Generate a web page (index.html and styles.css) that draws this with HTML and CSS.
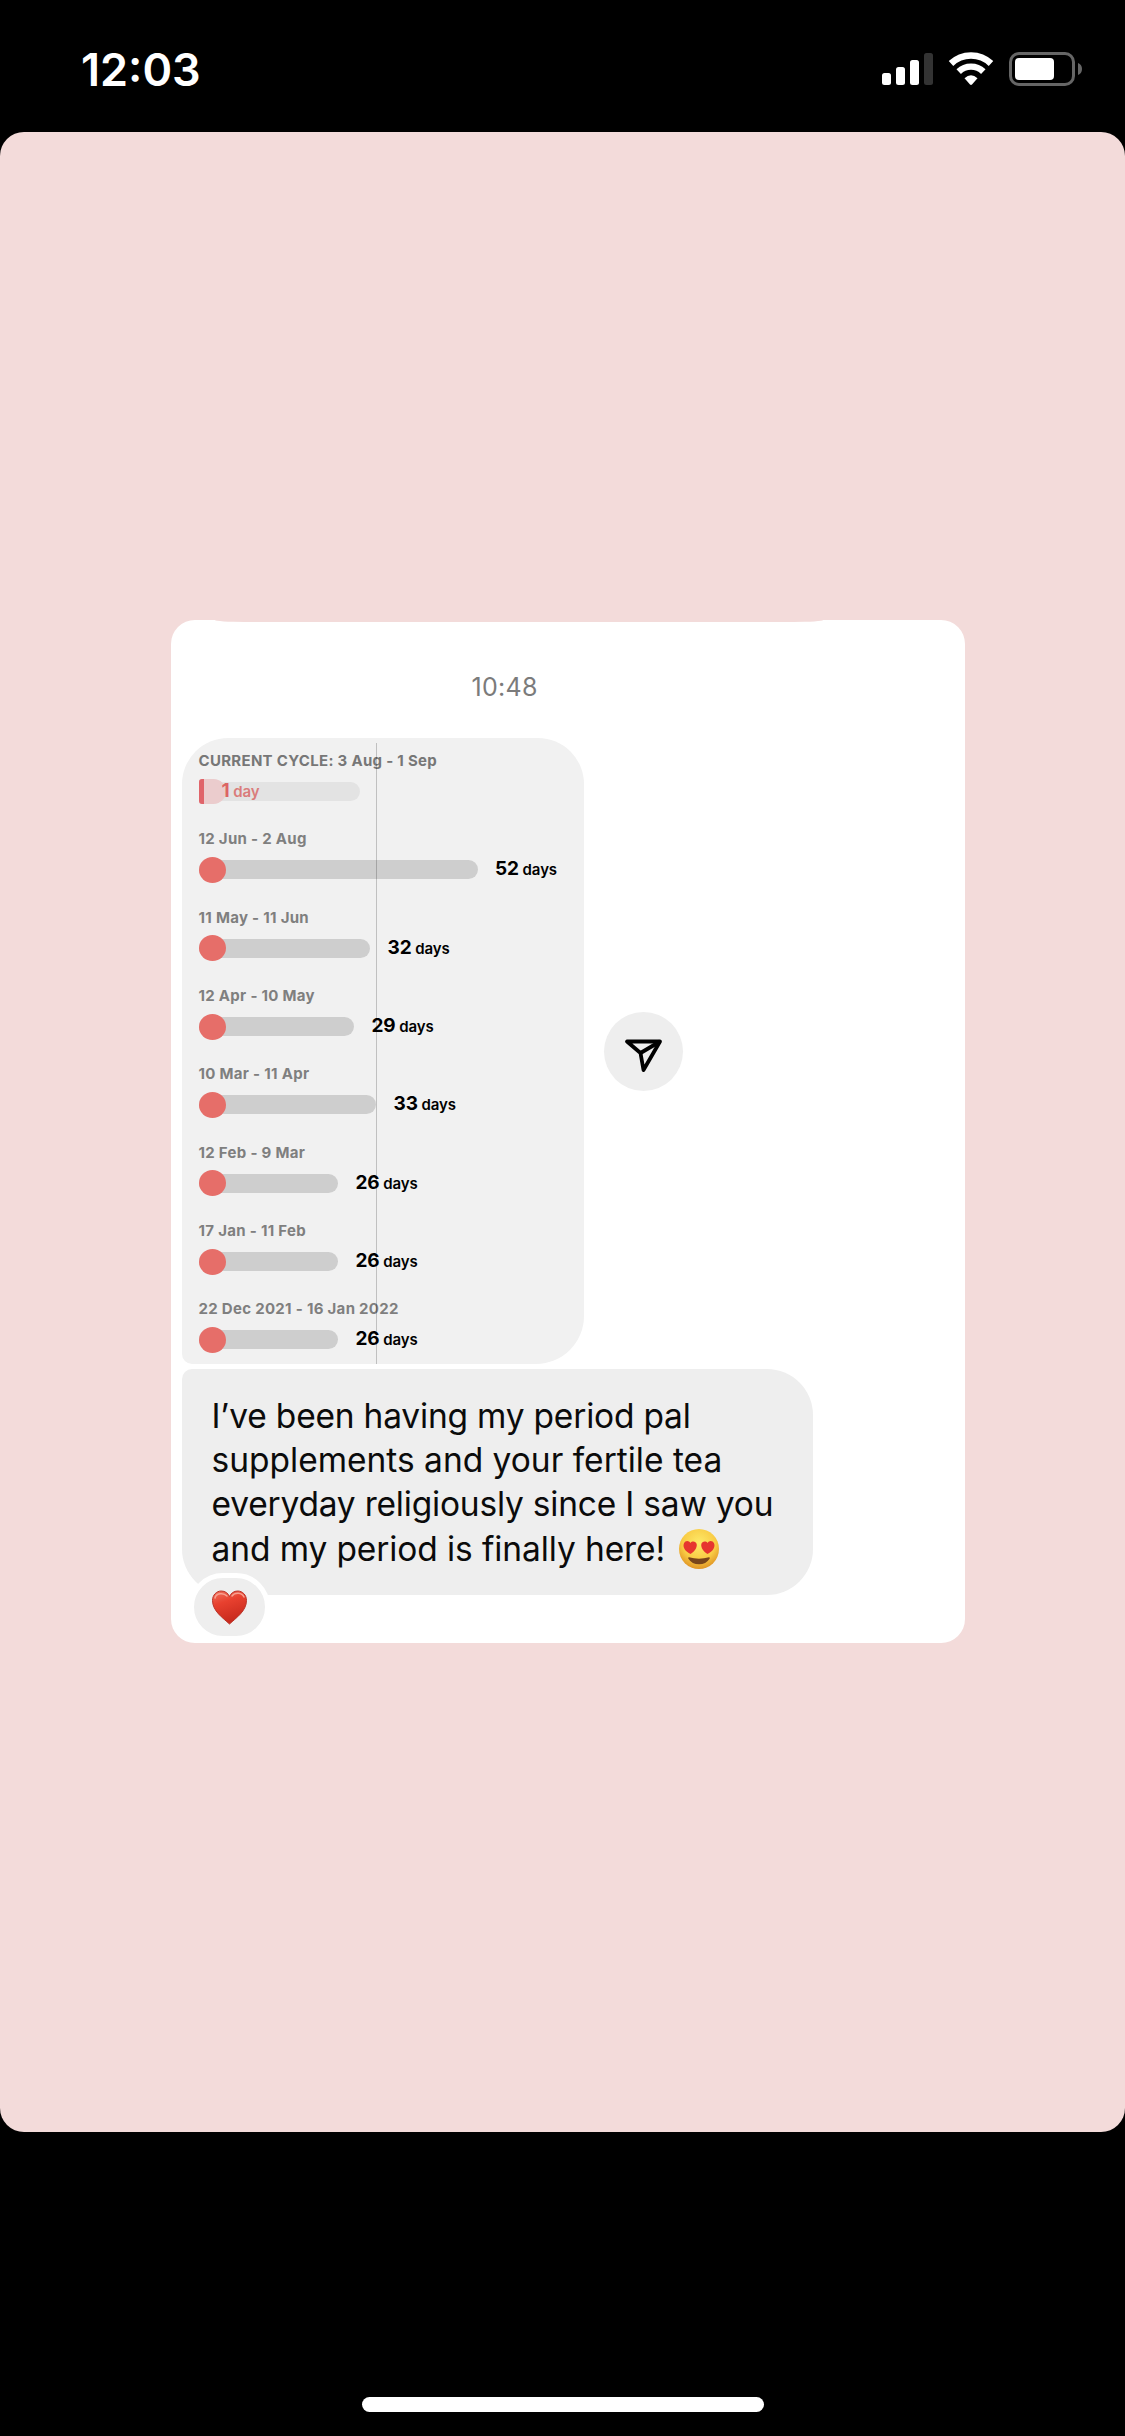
FILE: index.html
```html
<!DOCTYPE html>
<html lang="en">
<head>
<meta charset="utf-8">
<title>Story</title>
<link rel="stylesheet" href="styles.css">
</head>
<body>
<header class="status">
  <span class="clock">12:03</span>
  <div class="indicators">
    <svg class="signal" width="51" height="32" viewBox="0 0 51 32" fill="#fff">
      <rect x="0" y="20" width="9" height="12" rx="2.5"/>
      <rect x="14" y="14" width="9" height="18" rx="2.5"/>
      <rect x="28" y="7" width="9" height="25" rx="2.5"/>
      <rect x="42" y="0" width="9" height="32" rx="2.5" fill="#333"/>
    </svg>
    <svg class="wifi" width="46" height="34" viewBox="0 0 46 34">
      <path d="M3 11.5A29 29 0 0 1 43 11.5" fill="none" stroke="#fff" stroke-width="6.6"/>
      <path d="M10.700 19.600A17.600 17.600 0 0 1 35.300 19.600" fill="none" stroke="#fff" stroke-width="6.400"/>
      <path d="M16.500 26.200Q23 20.300 29.500 26.200L24 32.500Q23 33.300 22 32.500Z" fill="#fff"/>
    </svg>
    <svg class="battery" width="74" height="34" viewBox="0 0 74 34">
      <rect x="1.500" y="1.500" width="63" height="31" rx="8.500" fill="none" stroke="#666" stroke-width="3"/>
      <rect x="6" y="6" width="39" height="22" rx="4" fill="#fff"/>
      <path d="M69 11Q73 12.500 73 17T69 23Z" fill="#666"/>
    </svg>
  </div>
</header>
<main class="story">
  <section class="card">
    <time class="stamp">10:48</time>
    <div class="shared">
      <div class="chart">
        <div class="cycle current">
          <span class="range">CURRENT CYCLE: 3 Aug - 1 Sep</span>
          <div class="track"><span class="bar" style="width:161px"><i class="today"></i><span class="count"><b>1</b> day</span></span></div>
        </div>
        <div class="cycle"><span class="range">12 Jun - 2 Aug</span><div class="track"><span class="bar" style="width:279px"><i class="dot"></i></span><span class="count"><b>52</b> days</span></div></div>
        <div class="cycle"><span class="range">11 May - 11 Jun</span><div class="track"><span class="bar" style="width:171.500px"><i class="dot"></i></span><span class="count"><b>32</b> days</span></div></div>
        <div class="cycle"><span class="range">12 Apr - 10 May</span><div class="track"><span class="bar" style="width:155.500px"><i class="dot"></i></span><span class="count"><b>29</b> days</span></div></div>
        <div class="cycle"><span class="range">10 Mar - 11 Apr</span><div class="track"><span class="bar" style="width:177.500px"><i class="dot"></i></span><span class="count"><b>33</b> days</span></div></div>
        <div class="cycle"><span class="range">12 Feb - 9 Mar</span><div class="track"><span class="bar" style="width:139.500px"><i class="dot"></i></span><span class="count"><b>26</b> days</span></div></div>
        <div class="cycle"><span class="range">17 Jan - 11 Feb</span><div class="track"><span class="bar" style="width:139.500px"><i class="dot"></i></span><span class="count"><b>26</b> days</span></div></div>
        <div class="cycle"><span class="range">22 Dec 2021 - 16 Jan 2022</span><div class="track"><span class="bar" style="width:139.500px"><i class="dot"></i></span><span class="count"><b>26</b> days</span></div></div>
      </div>
      <div class="send">
        <svg width="79" height="79" viewBox="0 0 79 79" fill="none" stroke="#000" stroke-width="3.800" stroke-linejoin="round">
          <path d="M23 29.500H56L39.500 58L36.500 41Z"/><path d="M36.500 41L56 29.500"/>
        </svg>
      </div>
    </div>
    <div class="message">
      <p class="line snug">I’ve been having my period pal</p>
      <p class="line">supplements and your fertile tea</p>
      <p class="line snug">everyday religiously since I saw you</p>
      <p class="line last">and my period is finally here!
        <svg class="face" width="40" height="40" viewBox="0 0 40 40">
          <defs>
            <radialGradient id="skin" cx=".5" cy=".35" r=".68"><stop offset="0" stop-color="#fdea69"/><stop offset=".6" stop-color="#f9cc45"/><stop offset="1" stop-color="#dd8d20"/></radialGradient>
          </defs>
          <circle cx="20" cy="20" r="20" fill="url(#skin)"/>
          <path d="M11.500 25C5.500 22 3.500 17.500 5 14.200C6.500 11.300 10 11.500 11.300 14C13.300 11.500 17 12.200 17.700 15.200C18.300 18.500 15.500 22.500 11.500 25Z" fill="#e6352f"/>
          <path d="M28.500 25C34.500 22 36.500 17.500 35 14.200C33.500 11.300 30 11.500 28.700 14C26.700 11.500 23 12.200 22.300 15.200C21.700 18.500 24.500 22.500 28.500 25Z" fill="#e6352f"/>
          <path d="M10 28.300Q20 31 30 28.300C30.800 28.200 31 29 30.600 29.800Q27 35.300 20 35.300T9.400 29.800C9 29 9.200 28.200 10 28.300Z" fill="#79451a"/>
        </svg>
      </p>
      <div class="reaction">
        <svg width="35" height="35" viewBox="0 0 35 35">
          <defs><linearGradient id="love" x1="0" y1="0" x2=".35" y2="1"><stop offset="0" stop-color="#f0735f"/><stop offset=".4" stop-color="#e8412f"/><stop offset="1" stop-color="#c7291d"/></linearGradient></defs>
          <path d="M17.500 34C11 28 .5 21 .5 10.500C.5 5 4.500 1 9.300 1C13 1 16 3 17.500 6.500C19 3 22 1 25.700 1C30.500 1 34.500 5 34.500 10.500C34.500 21 24 28 17.500 34Z" fill="url(#love)" stroke="#bb3429" stroke-width="1"/>
          <path d="M3 8C4 3.500 11 2 15 6M20 6C23 2 30 2.500 32 7" fill="none" stroke="#f7a090" stroke-width="1.500" stroke-linecap="round"/>
        </svg>
      </div>
    </div>
  </section>
</main>
<footer class="home"><span class="home-bar"></span></footer>
</body>
</html>
```
FILE: styles.css
```css
* { box-sizing: border-box; }
body {
  margin: 0;
  width: 1125px;
  height: 2436px;
  display: flex;
  flex-direction: column;
  background: #000;
  font-family: Inter, "Liberation Sans", sans-serif;
}
.status {
  height: 132px;
  padding: 6px 42px 0 81px;
  display: flex;
  justify-content: space-between;
  align-items: center;
  color: #fff;
}
.clock { font-size: 45px; font-weight: 600; letter-spacing: 0; }
.indicators { display: flex; align-items: center; }
.wifi { margin-left: 15px; }
.battery { margin-left: 15px; }
.story {
  height: 2000px;
  padding: 488px 160.500px 489px 171px;
  border-radius: 24px;
  background: #f3dbda;
}
.card {
  height: 1023px;
  padding: 0 0 0 10.500px;
  display: flex;
  flex-direction: column;
  align-items: flex-start;
  position: relative;
  border-radius: 24px;
  background: #fff;
}
/* thin recess along the card's top edge */
.card::before {
  content: "";
  position: absolute;
  left: 44px;
  top: 0;
  width: 608px;
  height: 2px;
  background: #f3dbda;
  border-radius: 0 0 30px 30px / 0 0 2px 2px;
}
.stamp {
  height: 118px;
  padding-top: 14px;
  padding-left: 290px;
  line-height: 106px;
  font-size: 25px;
  letter-spacing: 0.3px;
  color: #7b7b7b;
}
.shared { display: flex; align-items: center; gap: 19.500px; }
.chart {
  width: 402.500px;
  height: 626px;
  padding: 14px 0 0 17px;
  position: relative;
  border-radius: 46px 46px 48px 10px;
  background: #f1f1f1;
}
/* average cycle marker */
.chart::after {
  content: "";
  position: absolute;
  left: 194.500px;
  top: 5px;
  bottom: 0;
  width: 1px;
  background: rgba(0, 0, 0, 0.2);
}
.cycle { height: 78.350px; display: flex; flex-direction: column; }
.range {
  height: 17px;
  line-height: 17px;
  font-size: 15px;
  font-weight: 700;
  letter-spacing: 0.3px;
  white-space: nowrap;
  color: #7f7f7f;
}
.current .range { color: #777; }
.track { height: 27px; margin-top: 9px; display: flex; align-items: center; gap: 17.500px; }
.bar {
  height: 19px;
  display: flex;
  align-items: center;
  border-radius: 9.500px;
  background: #cecece;
}
.dot { width: 27px; height: 26px; flex: none; border-radius: 50%; background: #e66e69; }
.count { font-size: 15px; font-weight: 600; letter-spacing: -0.1px; line-height: 26px; white-space: nowrap; color: #000; }
.count b { font-size: 19px; font-weight: 700; }
.current .bar { background: #e3e3e3; }
.today {
  width: 27px;
  height: 25px;
  flex: none;
  border-left: 5px solid #e0646a;
  border-radius: 3px 13px 13px 3px;
  background: #ebcccd;
}
.current .count { margin-left: -4px; color: #da7c7b; }
.current b { color: #dc6464; }
.send { width: 79px; height: 79px; border-radius: 50%; background: #eee; }
.send svg { display: block; }
.message {
  width: 631px;
  height: 226px;
  margin-top: 5px;
  padding: 25px 0 0 30px;
  position: relative;
  border-radius: 10px 46px 46px 46px;
  background: #eee;
}
.line {
  margin: 0;
  height: 44.200px;
  line-height: 44.200px;
  font-size: 33.500px;
  white-space: nowrap;
  color: #0b0b0b;
}
.snug { letter-spacing: -0.2px; }
.last { display: flex; align-items: center; gap: 14px; letter-spacing: -0.1px; }
.reaction {
  position: absolute;
  left: 7px;
  top: 204px;
  width: 81px;
  height: 68px;
  display: flex;
  align-items: center;
  justify-content: center;
  border: 5px solid #fff;
  border-radius: 34px;
  background: #eee;
}
.home { flex: 1; display: flex; align-items: flex-end; justify-content: center; padding-bottom: 24px; }
.home-bar { width: 402px; height: 15px; border-radius: 8px; background: #fff; }
```
